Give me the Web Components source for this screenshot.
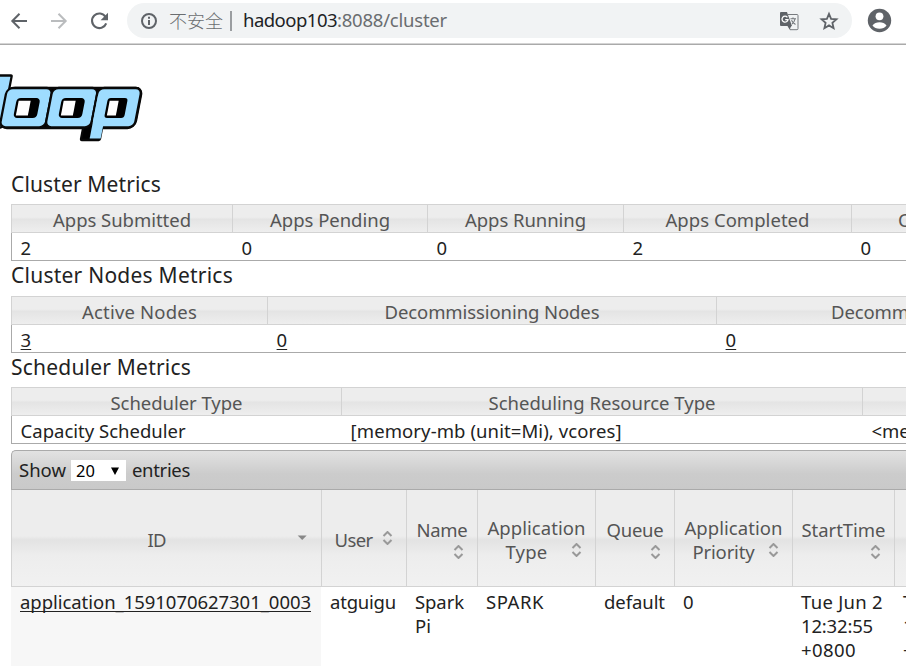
<!DOCTYPE html>
<html lang="en"><head><meta charset="utf-8"><title>Cluster</title>
<style>
html,body{margin:0;width:906px;height:666px;overflow:hidden;background:#fff}
body{font:18.5px/24px "Noto Sans","Noto Sans CJK SC",sans-serif;color:#222}
</style></head><body>
<cluster-page></cluster-page>
<script>
// Single line of text whose tracking is tuned to the width given in "w".
class FitText extends HTMLElement{
  connectedCallback(){
    this.attachShadow({mode:'open'}).innerHTML='<style>:host{display:inline-block;white-space:pre}:host([link]) span{text-decoration:underline;text-decoration-thickness:1px;text-underline-offset:2px;text-decoration-skip-ink:none}</style><span><slot></slot></span>';
    const w=+this.getAttribute('w'),s=this.shadowRoot.querySelector('span');
    if(w){const n=[...this.textContent].length,k=(w-s.getBoundingClientRect().width)/n;
      s.style.letterSpacing=k+'px';this.style.width=w+'px';}
  }
}
customElements.define('fit-text',FitText);

class BrowserBar extends HTMLElement{
  constructor(){super();this.attachShadow({mode:'open'}).innerHTML=`<style>
:host{display:flex;align-items:center;height:43px;box-sizing:border-box;padding:0 14px 2px 9px;border-bottom:0;box-shadow:0 1px #d4d4d4,0 2px #aaa;background:#fff}
svg{display:block;flex:none}.nav{display:flex;gap:20px;width:118px}
.pill{display:flex;align-items:center;width:725px;height:35px;border-radius:18px;background:#f1f3f4;box-sizing:border-box;padding:0 13px}
.warn{margin-left:11px;padding-bottom:2px;color:#6a6d70;font-size:18px;font-family:"Noto Sans CJK SC",sans-serif;font-weight:300}.sep{width:2px;height:20px;background:#9a9da0;margin:0 11px 0 7px}
.host{color:#202124;padding-bottom:2px}.path{color:#6a6d70;flex:1;padding-bottom:2px}.tr{margin-right:20px}.av{margin-left:15px}
</style><div class="nav">
<svg width="20" height="20" viewBox="0 0 20 20" fill="none" stroke="#5f6368" stroke-width="2"><path d="M18 10H4M10.5 2.7 3.3 10l7.2 7.3"/></svg>
<svg width="20" height="20" viewBox="0 0 20 20" fill="none" stroke="#babcbe" stroke-width="2"><path d="M2 10h14M9.5 2.7l7.2 7.3-7.2 7.3"/></svg>
<svg width="20" height="20" viewBox="0 0 20 20" fill="none" stroke="#5f6368" stroke-width="2.1"><path d="M16.6 6A7.3 7.3 0 1 0 17.2 12.3"/><path d="M19 1.8v7.4h-7.4z" fill="#5f6368" stroke="none"/></svg>
</div><div class="pill">
<svg width="18" height="18" viewBox="0 0 18 18" fill="none" stroke="#5f6368" stroke-width="2"><circle cx="9" cy="9" r="7"/><path d="M9 8v5M9 4.7v2"/></svg>
<fit-text class="warn" w="54">不安全</fit-text><i class="sep"></i>
<fit-text class="host" w="94">hadoop103</fit-text><fit-text class="path" w="110">:8088/cluster</fit-text>
<svg class="tr" width="20" height="20" viewBox="0 0 20 20"><path d="M9 3.5h9q1 0 1 1v13.2q0 1-1 1h-7L7.5 5" fill="#f1f3f4" stroke="#777a7e"/><path d="M2 1h6l1 3 4 11H2Q1 15 1 14V2Q1 1 2 1z" fill="#5f6368"/><path d="M8.5 15h4l-2.1 3.2z" fill="#5f6368"/><path d="M8.4 6.3a3 3 0 1 0 .6 2.3H6.2" fill="none" stroke="#fff" stroke-width="1.3"/><path d="M11.5 7.8H17M14 6.5v1.4M16 8q-.7 3.3-3 5M12.5 9.3q1.3 2.8 4 4.3" fill="none" stroke="#73777b" stroke-width="1.1"/></svg>
<svg width="20" height="20" viewBox="0 0 20 20" fill="none" stroke="#5f6368" stroke-width="1.8"><path d="M10 2.8l2.1 5 5.4.5-4.1 3.6 1.2 5.3-4.6-2.8-4.6 2.8 1.2-5.3-4.1-3.6 5.4-.5z"/></svg>
</div>
<svg class="av" width="25" height="25" viewBox="0 0 25 25"><circle cx="12.5" cy="12.5" r="11.7" fill="#5f6368"/><circle cx="12.5" cy="8.3" r="3.9" fill="#fff"/><path d="M5.5 17.5Q8 14.3 12.5 14.3t7 3.2Q17 20.8 12.5 20.8T5.5 17.5z" fill="#fff"/></svg>`}
}
customElements.define('browser-bar',BrowserBar);

class HadoopLogo extends HTMLElement{
  constructor(){super();this.attachShadow({mode:'open'}).innerHTML=`<style>:host{display:block;height:76px}svg{display:block}</style>
<svg width="150" height="76" viewBox="0 70 150 76"><g transform="translate(21 0) skewX(-11)" stroke="#080808" stroke-width="2.3">
<rect x="-24" y="75.5" width="29.5" height="52" rx="1" fill="#9edcff"/>
<rect x="4" y="88" width="134.5" height="40" rx="7"/><rect x="87" y="118" width="19" height="22" rx="1"/>
<g fill="#9edcff"><rect x="3.2" y="88" width="45.6" height="39.4" rx="6"/><rect x="48.8" y="88" width="45.6" height="39.4" rx="6"/>
<rect x="94.4" y="88" width="43.6" height="39.4" rx="6"/></g>
<rect x="95.6" y="96" width="11" height="42.5" fill="#9edcff" stroke="none"/>
<g stroke="none"><rect x="15" y="98" width="23.5" height="20" rx="4"/><rect x="60" y="98" width="23.5" height="20" rx="4"/><rect x="106" y="98" width="20" height="20" rx="3"/>
<g fill="#fff"><rect x="17.3" y="100.8" width="12" height="14.6"/><rect x="62.3" y="100.8" width="12" height="14.6"/><rect x="108.3" y="100.8" width="9" height="14.6"/></g></g></g></svg>`}
}
customElements.define('hadoop-logo',HadoopLogo);

// Titled metrics table; columns come from the "cols" track list.
class MetricsTable extends HTMLElement{
  connectedCallback(){this.attachShadow({mode:'open'}).innerHTML=`<style>
:host{display:block}h3{margin:0;font:inherit;height:31.5px;line-height:22px}
::slotted([slot=title]){font-size:21px;line-height:22px}
.t{height:56px;border-bottom:1px solid #aaa}
.r{display:grid;grid-template-columns:${this.getAttribute('cols')};box-sizing:border-box}
.h{height:29px;border:solid #d3d3d3;border-width:1px 0;background:linear-gradient(#ededed 45%,#e4e4e4 53%,#eee);color:#555}
.b{height:27px;border-left:1px solid #aaa}
::slotted([slot=h]){border-left:1px solid #d3d3d3;text-align:center;height:27px;line-height:29px;white-space:nowrap}
::slotted([slot=b]){padding-left:8.6px;line-height:30px;white-space:nowrap}
</style><h3><slot name="title"></slot></h3><div class="t"><div class="r h"><slot name="h"></slot></div><div class="r b"><slot name="b"></slot></div></div>`}
}
customElements.define('metrics-table',MetricsTable);

class SortHead extends HTMLElement{
  connectedCallback(){const y=this.getAttribute('iy'),one=this.hasAttribute('desc');this.attachShadow({mode:'open'}).innerHTML=`<style>
:host{display:grid;border-left:1px solid #d3d3d3;height:96px;color:#555;text-align:center}
.l{grid-area:1/1;display:flex;flex-direction:column;padding-top:${this.getAttribute('ty')}px;padding-right:${this.getAttribute('pr')||0}px;align-items:center}
svg{grid-area:1/1;justify-self:end;margin:${y}px ${this.getAttribute('ir')||13}px 0 0}
</style><div class="l"><slot></slot></div><svg width="11" height="14" viewBox="0 0 11 14">${one?'<path d="M.7 4.5h9L5.2 9z" fill="#888"/>':'<path d="M1.5 5l4-4 4 4M1.5 9l4 4 4-4" fill="none" stroke="#999" stroke-width="2"/>'}</svg>`}
}
customElements.define('sort-head',SortHead);

class AppsTable extends HTMLElement{
  constructor(){super();this.attachShadow({mode:'open'}).innerHTML=`<style>
:host{display:block;margin-top:6.7px}
.bar{height:40px;box-sizing:border-box;border:1px solid #aaa;border-right:0;border-radius:5px 0 0 0;background:linear-gradient(#e2e2e2,#ccc 60%,#c9c9c9);display:flex;align-items:center;padding:0 0 0 7px}
.sel{display:flex;align-items:center;justify-content:space-between;width:55px;height:21px;background:#fff;box-sizing:border-box;padding:0 7px 0 5px;margin:2px 6px 0 5px;font-size:16.5px;color:#000}
.g{display:grid;grid-template-columns:310px 85px 71px 118px 79px 118px 102px 30px}
.h{height:97px;box-sizing:border-box;border-bottom:1px solid #d3d3d3;background:linear-gradient(#ededed 48%,#e3e3e3 52%,#ededed 68%,#f1f1f1)}
.h>i{border-left:1px solid #d3d3d3}
.b{height:79px}.b>div{padding:3px 0 0 9px;display:flex;flex-direction:column;align-items:flex-start}.b>div:first-child{background:#f7f7f7}
</style><div class="bar"><fit-text w="47">Show</fit-text><span class="sel"><fit-text w="19">20</fit-text><svg width="8" height="8"><path d="M0 .5h8L4 8z"/></svg></span><fit-text w="58">entries</fit-text></div>
<div class="g h">
<sort-head ty="38" pr="20" iy="41" desc><fit-text w="18">ID</fit-text></sort-head>
<sort-head ty="38" pr="21" iy="41"><fit-text w="38">User</fit-text></sort-head>
<sort-head ty="28" iy="55"><fit-text w="51">Name</fit-text></sort-head>
<sort-head ty="26" iy="53"><fit-text w="98">Application</fit-text><fit-text style="margin-right:20px" w="42">Type</fit-text></sort-head>
<sort-head ty="28" iy="55"><fit-text w="57">Queue</fit-text></sort-head>
<sort-head ty="26" iy="53"><fit-text w="98">Application</fit-text><fit-text style="margin-right:20px" w="62">Priority</fit-text></sort-head>
<sort-head ty="28" iy="55"><fit-text w="84">StartTime</fit-text></sort-head><i></i></div>
<div class="g b"><div><fit-text link w="291">application_1591070627301_0003</fit-text></div>
<div><fit-text w="66">atguigu</fit-text></div><div><fit-text w="49">Spark</fit-text><fit-text w="16">Pi</fit-text></div>
<div><fit-text w="58">SPARK</fit-text></div><div><fit-text w="61">default</fit-text></div><div><fit-text>0</fit-text></div>
<div><fit-text w="82">Tue Jun 2</fit-text><fit-text w="72">12:32:55</fit-text><fit-text w="55">+0800</fit-text></div>
<div><span>T</span><span>1</span><span>+</span></div></div>`}
}
customElements.define('apps-table',AppsTable);

class ClusterPage extends HTMLElement{
  constructor(){super();this.attachShadow({mode:'open'}).innerHTML=`<style>
:host{display:block;width:906px;height:666px;overflow:hidden}
hadoop-logo{margin:27px 0 26.9px}main{display:block;padding-left:11px}metrics-table+metrics-table{margin-top:3.9px}
metrics-table{height:87.5px}
</style><browser-bar></browser-bar><hadoop-logo></hadoop-logo><main>
<metrics-table cols="221px 195px 196px 228px 200px"><fit-text slot="title" w="150">Cluster Metrics</fit-text>
<div slot="h"><fit-text w="138">Apps Submitted</fit-text></div><div slot="h"><fit-text w="120">Apps Pending</fit-text></div><div slot="h"><fit-text w="121">Apps Running</fit-text></div><div slot="h"><fit-text w="144">Apps Completed</fit-text></div><div slot="h" style="text-align:left;padding-left:46px">C</div>
<div slot="b">2</div><div slot="b">0</div><div slot="b">0</div><div slot="b">2</div><div slot="b">0</div></metrics-table>
<metrics-table cols="256px 449px 420px"><fit-text slot="title" w="222">Cluster Nodes Metrics</fit-text>
<div slot="h"><fit-text w="115">Active Nodes</fit-text></div><div slot="h"><fit-text w="215">Decommissioning Nodes</fit-text></div><div slot="h" style="text-align:left;padding-left:114px"><fit-text w="78">Decomm</fit-text></div>
<div slot="b"><fit-text link>3</fit-text></div><div slot="b"><fit-text link>0</fit-text></div><div slot="b"><fit-text link>0</fit-text></div></metrics-table>
<metrics-table cols="330px 521px 300px"><fit-text slot="title" w="180">Scheduler Metrics</fit-text>
<div slot="h"><fit-text w="132">Scheduler Type</fit-text></div><div slot="h"><fit-text w="227">Scheduling Resource Type</fit-text></div><div slot="h"></div>
<div slot="b"><fit-text w="165">Capacity Scheduler</fit-text></div><div slot="b"><fit-text w="271">[memory-mb (unit=Mi), vcores]</fit-text></div><div slot="b"><fit-text w="38">&lt;me</fit-text></div></metrics-table>
<apps-table></apps-table></main>`}
}
customElements.define('cluster-page',ClusterPage);
</script></body></html>
